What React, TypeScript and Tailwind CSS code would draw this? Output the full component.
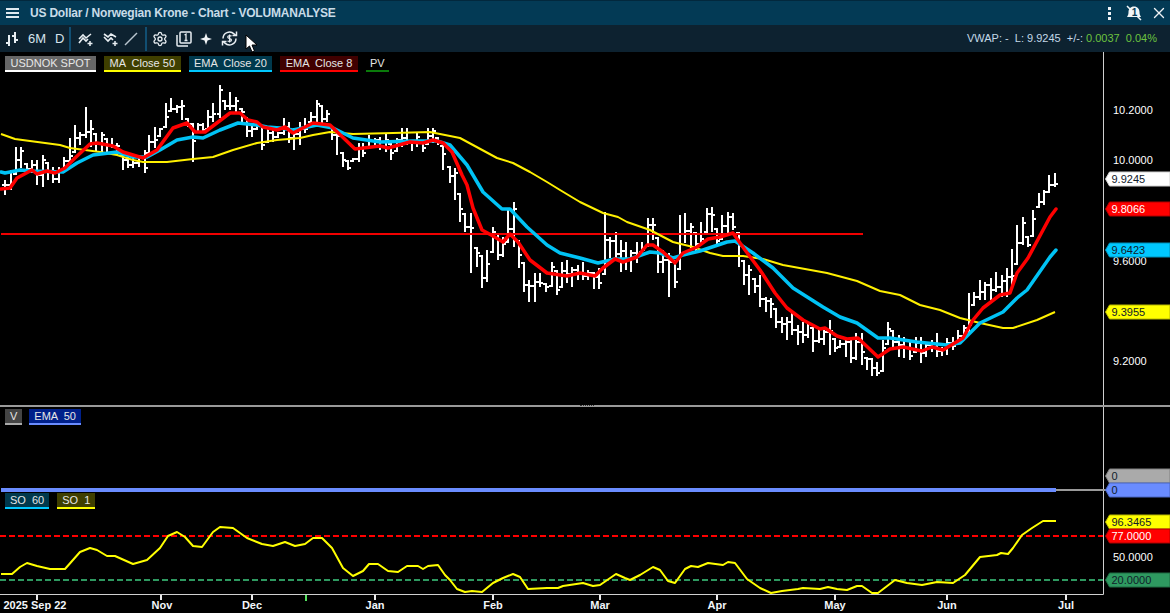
// App.tsx - USDNOK volume analysis chart window
import { Settings, X } from "lucide-react";

const FONT = "font-['Liberation_Sans',Arial,sans-serif]";

// [x, high, low] in page pixels
const BARS: number[][] = [
  [5,180,195],[11,170,190],[16,147,175],[21,147,168],[27,163,170],[32,160,173],[37,160,185],[43,155,187],[48,162,180],[53,167,183],
  [59,167,183],[64,157,170],[70,138,163],[75,125,153],[80,132,145],[86,107,138],[91,120,147],[96,133,152],[102,132,152],[107,138,152],
  [112,138,148],[117,143,155],[123,155,170],[128,157,168],[133,158,168],[139,155,167],[145,150,173],[149,135,154],[155,127,148],[160,128,137],
  [166,103,128],[171,98,112],[177,105,113],[182,100,120],[188,118,127],[193,123,162],[198,123,133],[203,123,132],[208,110,130],[213,103,122],
  [220,85,118],[225,100,110],[230,92,110],[236,97,113],[242,108,122],[247,117,137],[252,123,137],[257,122,130],[262,125,150],[268,127,143],
  [273,130,142],[278,132,138],[284,118,135],[289,122,143],[294,128,150],[300,122,145],[305,118,133],[311,112,123],[317,100,122],[322,105,123],
  [327,110,122],[332,127,140],[337,133,155],[343,152,167],[348,160,170],[353,158,162],[359,143,162],[363,143,157],[369,135,148],[375,138,148],
  [380,137,150],[386,133,152],[391,143,160],[397,138,152],[402,128,147],[407,128,145],[412,140,151],[417,133,147],[423,140,152],[428,128,145],
  [433,128,143],[438,137,145],[443,145,170],[450,166,183],[455,168,200],[460,193,222],[465,213,232],[471,213,273],[477,247,267],[482,255,288],
  [487,250,282],[493,227,253],[498,233,260],[503,237,257],[508,208,243],[514,202,247],[519,240,268],[524,262,292],[529,280,302],[535,273,302],
  [540,273,287],[546,283,292],[552,262,287],[557,270,295],[562,262,288],[567,260,283],[572,267,287],[578,265,280],[583,262,280],[588,270,280],
  [594,272,289],[599,268,289],[605,212,275],[610,237,258],[616,232,260],[621,240,272],[626,242,270],[631,250,272],[637,242,263],[642,242,253],
  [648,218,247],[653,218,240],[658,237,273],[663,250,273],[669,253,297],[675,260,288],[680,215,270],[685,213,243],[691,223,248],[696,232,253],
  [701,222,245],[707,208,233],[712,207,232],[717,228,247],[722,215,240],[728,212,235],[733,213,230],[739,232,267],[744,260,285],[749,265,295],
  [755,278,293],[760,275,307],[766,297,312],[771,298,318],[776,308,328],[782,317,333],[787,317,340],[792,312,335],[798,325,345],[803,322,343],
  [808,322,338],[813,327,352],[819,328,343],[824,327,345],[830,320,355],[835,338,352],[840,340,348],[846,338,357],[851,337,363],[856,333,360],
  [862,333,365],[867,357,370],[872,358,376],[877,362,376],[883,340,372],[888,322,345],[893,330,347],[899,335,357],[904,337,358],[910,340,360],
  [916,337,353],[921,337,363],[926,343,357],[932,340,352],[937,333,357],[942,347,356],[947,338,355],[953,337,350],[958,330,343],[964,325,340],
  [969,293,333],[974,292,306],[980,280,300],[985,282,300],[991,278,300],[996,272,292],[1002,275,297],[1007,268,297],[1012,249,288],[1017,225,265],
  [1023,217,245],[1028,236,247],[1033,210,237],[1039,193,208],[1044,190,205],[1049,175,193],[1055,173,187],
];

const MA50: number[][] = [
  [1,134],[15,139],[30,141],[60,145],[70,148],[100,152],[117,155],[133,160],[143,162],[167,162],[193,159],[213,157],[233,150],[257,143],[277,140],
  [300,138],[313,135],[330,132],[353,134],[393,133],[430,132],[460,138],[497,158],[513,163],[530,172],[547,182],[560,190],[580,202],[603,213],[618,217],
  [627,222],[650,230],[673,242],[693,247],[710,253],[723,256],[743,256],[763,259],[783,265],[827,273],[857,281],[880,291],[900,295],[920,305],[940,310],
  [960,318],[980,323],[1003,328],[1013,328],[1037,320],[1055,312],
];

const EMA20: number[][] = [
  [1,172],[5,173],[20,170],[33,171],[63,172],[77,163],[93,155],[117,152],[133,157],[147,157],[160,150],[177,140],[193,137],[203,138],[220,130],
  [238,123],[257,125],[267,127],[280,128],[293,130],[317,125],[333,128],[353,138],[380,142],[413,141],[437,141],[450,145],[467,165],[483,192],[502,209],
  [510,209],[527,227],[547,245],[560,253],[580,258],[598,263],[615,259],[630,259],[650,252],[660,253],[673,258],[683,255],[700,251],[727,242],[735,241],
  [753,253],[773,268],[793,288],[823,307],[840,317],[857,323],[878,338],[890,338],[917,342],[947,345],[960,343],[980,323],[1003,312],[1017,298],[1027,290],
  [1050,257],[1056,250],
];

const EMA8: number[][] = [
  [1,189],[10,188],[17,178],[32,170],[37,174],[47,171],[55,173],[65,168],[75,158],[90,144],[97,143],[113,146],[123,152],[143,158],[157,150],
  [173,128],[187,123],[195,132],[205,132],[230,113],[240,113],[248,120],[257,122],[263,127],[277,130],[285,127],[293,133],[313,123],[330,125],[355,149],
  [380,146],[388,148],[410,142],[423,143],[433,140],[443,143],[452,152],[462,175],[467,185],[473,208],[482,230],[493,236],[503,242],[510,234],[518,242],
  [530,260],[547,273],[567,276],[580,273],[595,276],[603,268],[615,259],[623,262],[637,257],[647,245],[653,245],[663,252],[675,263],[683,253],[697,247],
  [708,239],[720,237],[733,233],[745,250],[760,270],[775,293],[787,308],[803,320],[820,329],[825,328],[837,336],[847,339],[858,338],[878,357],[890,349],
  [903,347],[922,351],[932,347],[943,350],[963,338],[973,320],[983,308],[1000,295],[1010,293],[1017,273],[1028,258],[1050,217],[1056,209],
];

const SO1: number[][] = [
  [1,574],[12,574],[20,567],[27,563],[37,566],[50,569],[65,569],[80,552],[90,548],[97,550],[107,556],[115,556],[133,564],[147,560],[160,548],
  [168,536],[177,532],[185,537],[193,546],[202,547],[213,532],[220,527],[233,528],[247,538],[262,544],[273,546],[285,542],[295,546],[305,544],[313,538],
  [322,538],[332,548],[343,568],[353,576],[363,571],[369,564],[378,564],[388,571],[398,572],[407,566],[418,566],[423,569],[428,566],[438,565],[445,575],
  [450,580],[457,589],[465,592],[472,591],[482,592],[493,583],[503,578],[513,574],[520,577],[528,589],[547,588],[558,588],[563,586],[583,583],[593,586],
  [600,585],[616,574],[625,578],[630,580],[640,575],[653,567],[660,570],[668,581],[675,583],[685,569],[691,566],[698,567],[708,563],[723,565],[728,562],
  [735,563],[747,579],[760,588],[771,593],[782,591],[798,589],[803,588],[820,589],[828,587],[837,589],[847,590],[857,586],[862,586],[872,593],[878,593],
  [895,580],[907,583],[922,585],[937,582],[953,583],[965,575],[980,557],[997,555],[1001,553],[1008,554],[1013,548],[1022,535],[1032,528],[1043,521],[1056,521],
];

const MONTHS: [string, number, number][] = [
  ["2025 Sep 22", 37, 35], ["Nov", 161, 162], ["Dec", 252, 252], ["Jan", 375, 375], ["Feb", 493, 493],
  ["Mar", 600, 600], ["Apr", 717, 717], ["May", 835, 835], ["Jun", 947, 947], ["Jul", 1066, 1066],
];

const FRACS = [0.3, 0.7, 0.45, 0.2, 0.8, 0.35, 0.6, 0.15, 0.55, 0.75, 0.25];

const toPath = (pts: number[][]) => pts.map((p, i) => `${i ? "L" : "M"}${p[0]} ${p[1]}`).join("");

function PriceBars() {
  let prevClose = 0;
  return (
    <g stroke="#fff" strokeWidth={2} shapeRendering="crispEdges">
      {BARS.map(([x, hi, lo], i) => {
        const close = Math.round(hi + (lo - hi) * FRACS[i % FRACS.length]);
        const open = i === 0 ? close : Math.min(lo - 1, Math.max(hi + 1, prevClose));
        prevClose = close;
        return (
          <g key={x}>
            <path d={`M${x} ${hi}V${lo}`} />
            <path d={`M${x - 3} ${open}H${x}`} />
            <path d={`M${x} ${close}H${x + 3}`} />
          </g>
        );
      })}
    </g>
  );
}

function Tag({ y, fill, edge, text, dark, h = 14 }: { y: number; fill: string; edge: string; text: string; dark?: boolean; h?: number }) {
  const t = y - h / 2;
  return (
    <g>
      <path d={`M1105.5 ${y}L1109.5 ${t}H1170V${t + h}H1109.5Z`} fill={fill} stroke={edge} />
      <text x={1111.5} y={y + 4} fontSize={11} fill={dark ? "#10202a" : "#fff"}>{text}</text>
    </g>
  );
}

function Legend({ label, bg, line, pad = "px-[5px]" }: { label: string; bg: string; line: string; pad?: string }) {
  return (
    <div className={`h-4 border-b-2 text-[11px] leading-[14px] whitespace-pre text-[#e6e6e6] ${pad} ${bg} ${line}`}>
      {label}
    </div>
  );
}

function HamburgerIcon() {
  return (
    <svg width="14" height="10" viewBox="0 0 14 10" fill="#dfe9ef">
      <rect y="0" width="13" height="2" /><rect y="4" width="13" height="2" /><rect y="8" width="13" height="2" />
    </svg>
  );
}

function OhlcIcon() {
  return (
    <svg width="14" height="16" viewBox="0 0 14 16" fill="none" stroke="#e8eef2" strokeWidth="2">
      <path d="M4 4v11M1 12h3M10 1v11M7 5h3M10 9h3" />
    </svg>
  );
}

function TrendAddIcon({ flip }: { flip?: boolean }) {
  return (
    <svg width="16" height="16" viewBox="0 0 16 16" fill="none" stroke="#e8eef2" strokeWidth="1.6">
      {flip ? (
        <path d="M1 3l4 3 3-3 5 3M1 6l4 4 3-3 2 2" />
      ) : (
        <path d="M1 8l4-4 3 3 5-4M1 12l4-5 3 3 2-2" />
      )}
      <path d="M12 10v5M9.5 12.5h5" strokeWidth="1.5" />
    </svg>
  );
}

function LayersOneIcon() {
  return (
    <svg width="16" height="16" viewBox="0 0 16 16" fill="none" stroke="#e8eef2" strokeWidth="1.5">
      <rect x="4" y="1" width="11" height="11" rx="1" />
      <path d="M1 4v10a1 1 0 0 0 1 1h10" />
      <path d="M8.5 4l1.5-.8V9.5M8.5 9.5h3" strokeWidth="1.3" />
    </svg>
  );
}

function DollarSyncIcon() {
  return (
    <svg width="17" height="17" viewBox="0 0 17 17" fill="none" stroke="#e8eef2" strokeWidth="1.5">
      <path d="M2 8.5a6.5 6.5 0 0 1 11-4.6L15 5.5M15 8.5a6.5 6.5 0 0 1-11 4.6L2 11.5" />
      <path d="M15.5 1.5v4h-4M1.5 15.5v-4h4" />
      <path d="M10.5 6.2c-.5-.8-3.8-1-3.8.9 0 1.9 3.8 1 3.8 2.9 0 1.8-3.3 1.7-3.9.7M8.6 4.5v8" strokeWidth="1.2" />
    </svg>
  );
}

function BellOneIcon() {
  return (
    <svg width="16" height="16" viewBox="0 0 16 16">
      <path d="M8 1.5c3.5 0 5.5 2.5 5.5 5.5 0 2 .5 3.500 1.500 5H1c1-1.500 1.500-3 1.500-5 0-3 2-5.500 5.500-5.500z" fill="#f0f4f6" />
      <path d="M1 1l14 14" stroke="#f0f4f6" strokeWidth="1.500" />
      <text x="8.500" y="11" textAnchor="middle" fontSize="10" fontWeight="700" fontFamily="Liberation Sans" fill="#033a55">1</text>
    </svg>
  );
}

function Divider() {
  return <div className="w-0.5 h-[24px] bg-[#114f73]" />;
}

function TitleBar() {
  return (
    <div className="h-[25px] bg-[#033a55] border-t border-[#02283d] flex items-center pl-[6px] pr-1 shrink-0">
      <HamburgerIcon />
      <span className="ml-[10px] text-[12px] font-bold tracking-[-0.2px] text-[#c9dce8] whitespace-nowrap">
        US Dollar / Norwegian Krone - Chart - VOLUMANALYSE
      </span>
      <div className="ml-auto flex items-center">
        <div className="flex flex-col gap-[2px]">
          <span className="w-[3px] h-[3px] bg-[#eef2f5]" />
          <span className="w-[3px] h-[3px] bg-[#eef2f5]" />
          <span className="w-[3px] h-[3px] bg-[#eef2f5]" />
        </div>
        <div className="ml-[15px]"><BellOneIcon /></div>
        <X className="ml-[8px] mr-[-2px] text-[#eef2f5]" size={18} strokeWidth={1.8} />
      </div>
    </div>
  );
}

function ToolBar() {
  return (
    <div className="relative h-[27px] bg-[#0d2230] flex items-center pl-[5px] text-[#d5e3ec] shrink-0">
      <OhlcIcon />
      <span className="ml-[9px] text-[13px]">6M</span>
      <span className="ml-[9px] text-[13px]">D</span>
      <div className="ml-[5px]"><Divider /></div>
      <div className="ml-[7px]"><TrendAddIcon /></div>
      <div className="ml-[9px]"><TrendAddIcon flip /></div>
      <svg className="ml-[5px]" width="14" height="14" viewBox="0 0 14 14" stroke="#b9c6cf" strokeWidth="1.500"><path d="M1 13L13 1" /></svg>
      <div className="ml-[7px]"><Divider /></div>
      <Settings className="ml-[5px] text-[#e8eef2]" size={16} strokeWidth={2} />
      <div className="ml-[8px]"><LayersOneIcon /></div>
      <svg className="ml-[8px]" width="12" height="12" viewBox="0 0 12 12" fill="#f0f4f6"><path d="M6 0l1.500 4.500L12 6 7.500 7.500 6 12 4.500 7.500 0 6l4.500-1.500z" /></svg>
      <div className="ml-[9px]"><DollarSyncIcon /></div>
      <svg className="absolute left-[245px] top-[9px]" width="15" height="19" viewBox="0 0 15 19">
        <path d="M1 1v14l3.500-3 2.500 6 2.500-1-2.500-6h5z" fill="#fff" stroke="#000" strokeWidth="1" />
      </svg>
      <div className="ml-auto pr-[13px] text-[11px] whitespace-pre text-[#c3d9e8]">
        VWAP: -  L: 9.9245  +/-: <span className="text-[#6cc23f]">0.0037  0.04%</span>
      </div>
    </div>
  );
}

function MainPanel() {
  return (
    <div className="relative h-[353px] shrink-0">
      <svg width="1170" height="353" viewBox="0 52 1170 353" fontFamily="Liberation Sans" className="block">
        <path d="M1103.500 52V405" stroke="#cfcfcf" />
        <PriceBars />
        <path d="M1 234H863" stroke="#f00000" strokeWidth="2" />
        <path d={toPath(MA50)} fill="none" stroke="#fff000" strokeWidth="2" strokeLinejoin="round" />
        <path d={toPath(EMA20)} fill="none" stroke="#00c3f5" strokeWidth="3.500" strokeLinejoin="round" strokeLinecap="round" />
        <path d={toPath(EMA8)} fill="none" stroke="#ff0000" strokeWidth="3.500" strokeLinejoin="round" strokeLinecap="round" />
        {[["10.2000", 114], ["10.0000", 164], ["9.6000", 265], ["9.2000", 365]].map(([t, y]) => (
          <text key={t} x={1113} y={y} fontSize={11} fill="#fff">{t}</text>
        ))}
        <Tag y={179} fill="#fff" edge="#d0d0d0" text="9.9245" dark />
        <Tag y={209} fill="#ff0000" edge="#b00000" text="9.8066" />
        <Tag y={250} fill="#00c8ff" edge="#0090b8" text="9.6423" dark />
        <Tag y={312} fill="#ffff00" edge="#b8b800" text="9.3955" dark />
      </svg>
      <div className="absolute left-[5px] top-[4px] flex gap-2">
        <Legend label="USDNOK SPOT" bg="bg-[#666666]" line="border-white" pad="px-[5.5px]" />
        <Legend label="MA  Close 50" bg="bg-[#3f3f00]" line="border-[#ffff00]" pad="px-[5.5px]" />
        <Legend label="EMA  Close 20" bg="bg-[#00394d]" line="border-[#00c8ff]" pad="px-[5.5px]" />
        <Legend label="EMA  Close 8" bg="bg-[#400000]" line="border-[#ff0000]" pad="px-[5.5px]" />
        <Legend label="PV" bg="bg-black" line="border-[#0a7a0a]" pad="px-1" />
      </div>
    </div>
  );
}

function Separator() {
  return (
    <div className="h-[2px] bg-[#9a9a9a] flex justify-center shrink-0">
      <div className="ml-[3px] w-[14px] h-[1px] border-t border-dotted border-[#333]" />
    </div>
  );
}

function LowerPanel() {
  return (
    <div className="relative flex-1">
      <svg width="1170" height="206" viewBox="0 407 1170 206" fontFamily="Liberation Sans" className="block">
        <path d="M1103.500 407V594.500H0" fill="none" stroke="#cfcfcf" />
        <path d="M1056 490H1106" stroke="#9a9a9a" strokeWidth="2" />
        <path d="M1 490H1056" stroke="#6a8cff" strokeWidth="4" />
        <path d="M0 536H1103" stroke="#ff0000" strokeWidth="2" strokeDasharray="6 3" />
        <path d="M0 580H1103" stroke="#2e9960" strokeWidth="2" strokeDasharray="6 3" />
        <path d={toPath(SO1)} fill="none" stroke="#ffff00" strokeWidth="2" strokeLinejoin="round" />
        {MONTHS.map(([t, tick, x]) => (
          <g key={t}>
            <path d={`M${tick} 595V600`} stroke="#eaeaea" strokeWidth="2" />
            <text x={x} y={609} fontSize={11} fontWeight={700} fill="#f2f6fa" textAnchor="middle">{t}</text>
          </g>
        ))}
        <path d="M306 595V601" stroke="#55e060" strokeWidth="2" />
        <Tag y={476} fill="#aaaaaa" edge="#808080" text="0" dark />
        <Tag y={490} fill="#6a8cff" edge="#4a66c0" text="0" dark />
        <Tag y={522} fill="#ffff00" edge="#b8b800" text="96.3465" dark />
        <Tag y={536} fill="#ff0000" edge="#b00000" text="77.0000" />
        <text x={1113} y={561} fontSize={11} fill="#fff">50.0000</text>
        <Tag y={580} fill="#2e9960" edge="#1f6b43" text="20.0000" dark />
      </svg>
      <div className="absolute left-[5px] top-[2px] flex gap-[7px]">
        <Legend label="V" bg="bg-[#444444]" line="border-[#aaaaaa]" />
        <Legend label="EMA  50" bg="bg-[#00208a]" line="border-[#6a8cff]" />
      </div>
      <div className="absolute left-[5px] top-[86px] flex gap-2">
        <Legend label="SO  60" bg="bg-[#00394d]" line="border-[#00c8ff]" />
        <Legend label="SO  1" bg="bg-[#3f3f00]" line="border-[#ffff00]" />
      </div>
    </div>
  );
}

export default function App() {
  return (
    <div className={`${FONT} w-[1170px] h-[613px] bg-black flex flex-col overflow-hidden`}>
      <TitleBar />
      <ToolBar />
      <MainPanel />
      <Separator />
      <LowerPanel />
    </div>
  );
}
